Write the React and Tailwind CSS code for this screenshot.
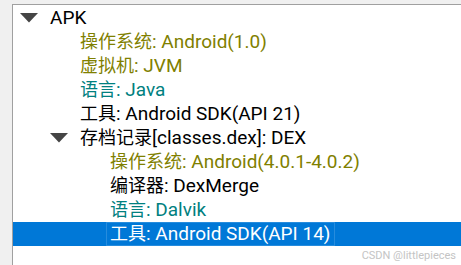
import React from 'react';

const rows = [
  { level: 0, toggle: true, label: 'APK', color: 'text-black' },
  { level: 1, label: '操作系统: Android(1.0)', color: 'text-[#808000]' },
  { level: 1, label: '虚拟机: JVM', color: 'text-[#808000]' },
  { level: 1, label: '语言: Java', color: 'text-[#008080]' },
  { level: 1, label: '工具: Android SDK(API 21)', color: 'text-black' },
  { level: 1, toggle: true, label: '存档记录[classes.dex]: DEX', color: 'text-black' },
  { level: 2, label: '操作系统: Android(4.0.1-4.0.2)', color: 'text-[#808000]' },
  { level: 2, label: '编译器: DexMerge', color: 'text-black' },
  { level: 2, label: '语言: Dalvik', color: 'text-[#008080]' },
  { level: 2, label: '工具: Android SDK(API 14)', color: 'text-white', selected: true }
];

const indentClass = ['pl-[7px]', 'pl-[37px]', 'pl-[67px]'];

const Caret = () => (
  <svg width="18" height="10" viewBox="0 0 18 10" className="shrink-0 mr-[12px]">
    <polygon points="0,0 18,0 9,9.5" fill="#454545" />
  </svg>
);

// CJK prefix is set a touch smaller than the latin run, like YaHei does
const Label = ({ text }) => {
  const m = text.match(/^([\u4e00-\u9fff]+)(.*)$/);
  if (!m) return text;
  return (
    <>
      <span className="text-[18px]">{m[1]}</span>
      {m[2]}
    </>
  );
};

const Row = ({ row }) => (
  <div
    className={`h-6 flex items-center ${indentClass[row.level]} ${
      row.selected ? 'bg-[#0078d7]' : ''
    }`}
  >
    {row.toggle && <Caret />}
    {!row.toggle && <div className="w-[30px] shrink-0" />}
    <span
      className={`whitespace-nowrap leading-6 ${row.color} ${
        row.selected ? 'border border-white/15 -ml-[4px] pl-[3px] pr-1 h-6 flex items-center' : ''
      }`}
    >
      <Label text={row.label} />
    </span>
  </div>
);

export default function App() {
  return (
    <div
      className="w-[461px] h-[265px] bg-[#f0f0f0] pl-[12px] pt-[4px] overflow-hidden relative"
      style={{ fontFamily: 'Roboto, "Noto Sans CJK SC", sans-serif' }}
    >
      <div className="h-full bg-white border-l border-t border-[#a0a0a0] pt-[1px] text-[19px]">
        {rows.map((row, i) => (
          <Row key={i} row={row} />
        ))}
      </div>
      <div className="absolute right-[5px] bottom-[4px] text-[11px] text-[#c4c4c4] leading-none">
        CSDN @littlepieces
      </div>
    </div>
  );
}
